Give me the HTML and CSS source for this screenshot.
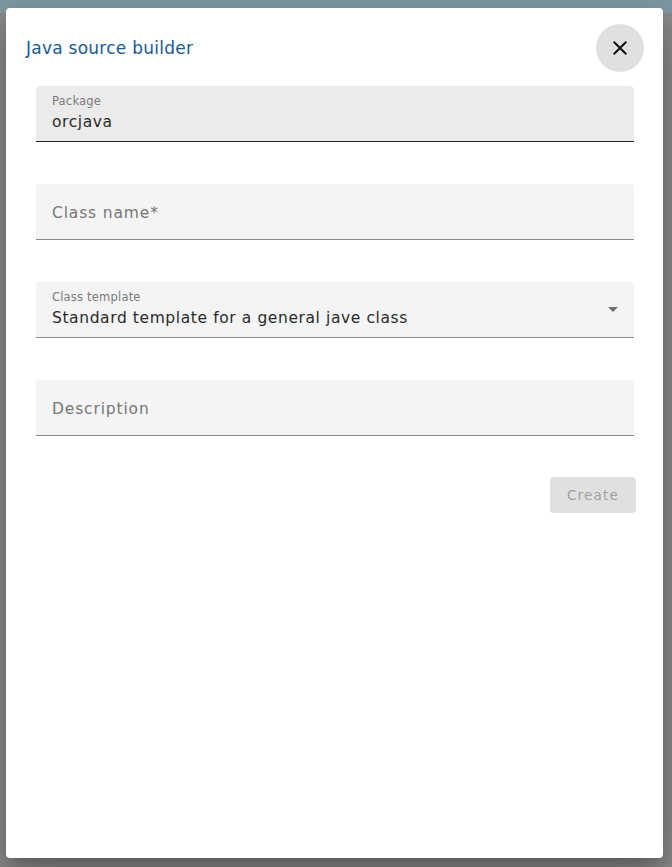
FILE: index.html
```html
<!DOCTYPE html>
<html lang="en">
<head>
<meta charset="utf-8">
<title>Java source builder</title>
<link rel="stylesheet" href="styles.css">
</head>
<body>
<div class="dialog" role="dialog">
  <div class="header">
    <h2 class="title">Java source builder</h2>
    <button class="close" aria-label="Close">
      <svg width="24" height="24" viewBox="0 0 24 24"><path d="M19 6.41 17.59 5 12 10.59 6.41 5 5 6.41 10.59 12 5 17.59 6.41 19 12 13.41 17.59 19 19 17.59 13.41 12z" fill="#111"/></svg>
    </button>
  </div>
  <div class="form">
    <div class="field focused">
      <div class="label">Package</div>
      <div class="value">orcjava</div>
    </div>
    <div class="field empty">
      <div class="placeholder">Class name*</div>
    </div>
    <div class="field select">
      <div class="label">Class template</div>
      <div class="value">Standard template for a general jave class</div>
      <span class="arrow"></span>
    </div>
    <div class="field empty">
      <div class="placeholder">Description</div>
    </div>
    <div class="actions">
      <button class="create" disabled>Create</button>
    </div>
  </div>
</div>
</body>
</html>
```
FILE: styles.css
```css
html, body {
  margin: 0;
  padding: 0;
}
body {
  width: 672px;
  height: 867px;
  overflow: hidden;
  background: linear-gradient(#7f9aa3 0, #7f9aa3 13px, #8b8b8b 13px);
  font-family: "DejaVu Sans", "Liberation Sans", sans-serif;
  padding-top: 8px;
  padding-left: 6px;
  box-sizing: border-box;
}
.dialog {
  width: 657px;
  height: 850px;
  background: #fff;
  border-radius: 4px;
  box-shadow: 0 11px 15px -7px rgba(0,0,0,.2), 0 24px 38px 3px rgba(0,0,0,.14), 0 9px 46px 8px rgba(0,0,0,.12);
  box-sizing: border-box;
  padding: 16px 19px 0 20px;
}
.header {
  display: flex;
  align-items: center;
  justify-content: space-between;
  height: 48px;
}
.title {
  margin: 0;
  font-size: 17px;
  font-weight: 400;
  color: #1b5a92;
  letter-spacing: 0.25px;
}
.close {
  width: 48px;
  height: 48px;
  border-radius: 50%;
  border: none;
  background: #e0e0e0;
  display: flex;
  align-items: center;
  justify-content: center;
  padding: 0;
}
.form {
  margin-top: 14px;
  padding-left: 10px;
  width: 598px;
  display: flex;
  flex-direction: column;
  gap: 42px;
}
.field {
  position: relative;
  height: 56px;
  box-sizing: border-box;
  background: #f4f4f4;
  border-radius: 4px 4px 0 0;
  border-bottom: 1px solid #8a8a8a;
  padding: 8px 16px 0;
}
.field.focused {
  background: #ebebeb;
  border-bottom-color: #222;
}
.label {
  font-size: 11.5px;
  line-height: 14px;
  color: #7a7a7a;
  letter-spacing: 0.2px;
}
.value {
  font-size: 15.5px;
  line-height: 24px;
  margin-top: 2px;
  color: #2a2a2a;
  letter-spacing: 0.6px;
}
.field.empty {
  display: flex;
  align-items: center;
  padding-top: 2px;
}
.placeholder {
  font-size: 15.5px;
  color: #777;
  letter-spacing: 0.85px;
}
.arrow {
  position: absolute;
  right: 16px;
  top: 25px;
  width: 0;
  height: 0;
  border-left: 5px solid transparent;
  border-right: 5px solid transparent;
  border-top: 5px solid #6f6f6f;
}
.actions {
  display: flex;
  justify-content: flex-end;
  margin-top: -1px;
  margin-right: -2px;
}
.create {
  width: 86px;
  height: 36px;
  border: none;
  border-radius: 4px;
  background: #e0e0e0;
  color: #a0a0a0;
  font-family: "DejaVu Sans", "Liberation Sans", sans-serif;
  font-size: 13.5px;
  letter-spacing: 1.2px;
  padding: 0;
}
```
